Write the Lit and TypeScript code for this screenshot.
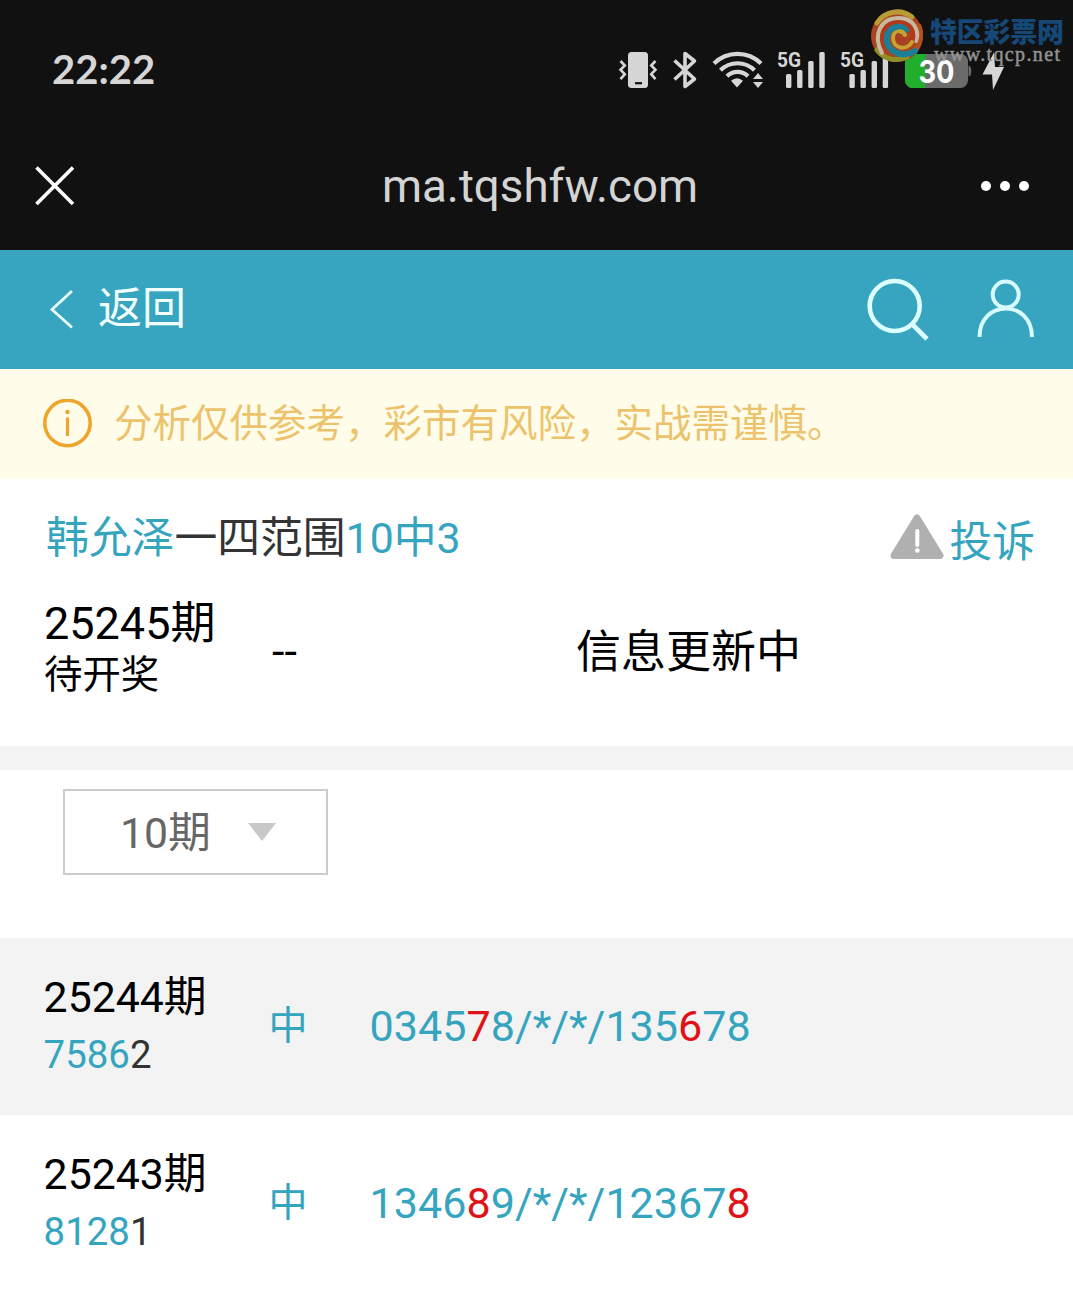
import { LitElement, html, svg, css } from "lit";
import { customElement } from "lit/decorators.js";

interface Run {
  text: string;
  tone: "hit" | "base" | "dark";
}

interface Draw {
  issue: string;
  result: Run[];
  mark: string;
  numbers: Run[];
}

const draws: Draw[] = [
  {
    issue: "25244期",
    result: [
      { text: "7586", tone: "base" },
      { text: "2", tone: "dark" },
    ],
    mark: "中",
    numbers: [
      { text: "0345", tone: "base" },
      { text: "7", tone: "hit" },
      { text: "8/*/*/135", tone: "base" },
      { text: "6", tone: "hit" },
      { text: "78", tone: "base" },
    ],
  },
  {
    issue: "25243期",
    result: [
      { text: "8128", tone: "base" },
      { text: "1", tone: "dark" },
    ],
    mark: "中",
    numbers: [
      { text: "1346", tone: "base" },
      { text: "8", tone: "hit" },
      { text: "9/*/*/12367", tone: "base" },
      { text: "8", tone: "hit" },
    ],
  },
];

@customElement("status-bar")
export class StatusBar extends LitElement {
  static styles = css`
    :host {
      display: flex;
      box-sizing: border-box;
      height: 125px;
      padding: 48px 60px 0 52px;
      justify-content: space-between;
      align-items: flex-start;
      position: relative;
      color: #d6d6d6;
    }
    .clock {
      font: 700 40px/42px Lato, "Open Sans", sans-serif;
    }
    .icons {
      display: flex;
    }
    .icons svg {
      display: block;
    }
    .small {
      font: 700 20px "Roboto", sans-serif;
    }
    .charge {
      font: 700 31px Inter, "Roboto", sans-serif;
    }
    .watermark {
      position: absolute;
      left: 865px;
      top: 5px;
    }
    .brand {
      font: 900 27px "Noto Sans CJK SC", sans-serif;
    }
    .site {
      font: 400 20px "Liberation Serif", serif;
    }
  `;

  private signal(left: number, width: number, text: number, bars: number) {
    const tops = [74, 70, 61, 52];
    return html`<svg width=${width} height="44" viewBox="${left} 48 ${width} 44">
      <text class="small" x=${text} y="67" fill="#d6d6d6" textLength="24" lengthAdjust="spacingAndGlyphs">5G</text>
      ${tops.map(
        (top, i) =>
          svg`<rect x=${bars + i * 11.1} y=${top} width="5.4" height=${88 - top} rx="1.5" fill="#d6d6d6"/>`
      )}
    </svg>`;
  }

  render() {
    return html`
      <div class="clock">22:22</div>
      <div class="icons">
        <svg width="46" height="44" viewBox="615 48 46 44" fill="none" stroke="#d6d6d6" stroke-width="2.6">
          <rect x="628" y="52" width="20" height="36" rx="3.5" fill="#d6d6d6" stroke="none" />
          <path d="M635 83.2h7" stroke="#111" stroke-width="2.2" />
          <path d="M620.5 61l4.3 4.5-4.3 4.2 4.3 4.5-4.3 5M655.5 61l-4.3 4.5 4.3 4.2-4.3 4.5 4.3 5" />
        </svg>
        <svg width="48" height="44" viewBox="661 48 48 44" fill="none" stroke="#d6d6d6" stroke-width="3.6" stroke-linejoin="round">
          <path d="M674.5 60.5l20 18.5-9.5 7.5v-33l9.5 7.5-20 18.5" />
        </svg>
        <svg width="60" height="44" viewBox="709 48 60 44" fill="none" stroke="#d6d6d6" stroke-width="4.2">
          <path d="M714 63.5a33.5 33.5 0 0 1 47 0" />
          <path d="M720.5 70.3a24 24 0 0 1 34 0" />
          <path d="M727 76.2a15 15 0 0 1 21 0" />
          <path d="M731 80.8q6-5 12 0l-6 6.8z" fill="#d6d6d6" stroke="none" />
          <path d="M753 79l5-6 5 6zM753 82h10l-5 6z" fill="#d6d6d6" stroke="none" />
        </svg>
        ${this.signal(769, 64, 777, 786)} ${this.signal(833, 62, 840, 849.4)}
        <svg width="80" height="44" viewBox="895 48 80 44">
          <defs>
            <clipPath id="cell"><rect x="905" y="54" width="63" height="34" rx="7.5" /></clipPath>
          </defs>
          <g clip-path="url(#cell)">
            <rect x="905" y="54" width="63" height="34" fill="#6b6b6b" />
            <rect x="905" y="54" width="20.5" height="34" fill="#20ae2c" />
          </g>
          <path d="M968.5 65.5q2.8.5 2.8 5.500t-2.8 5.5z" fill="#6b6b6b" />
          <text class="charge" x="918.5" y="83" fill="#fff" textLength="36" lengthAdjust="spacingAndGlyphs">30</text>
        </svg>
        <svg width="38" height="44" viewBox="975 48 38 44">
          <path d="M994 52.500L982.500 74.500h9.500L993 90l11-23h-9z" fill="#d6d6d6" />
        </svg>
      </div>
      <svg class="watermark" width="205" height="62" viewBox="865 5 205 62">
        <g fill="none" stroke-linecap="round">
          <circle cx="897" cy="36" r="26" fill="#a8441f" />
          <path d="M877 23A24 24 0 0 1 912 17" stroke="#b99b34" stroke-width="5" />
          <path d="M919 26A24 24 0 0 1 914 51" stroke="#b3501d" stroke-width="5" />
          <path d="M877 50A24 24 0 0 0 907 57" stroke="#8f9128" stroke-width="5" />
          <path d="M882 53C872 34 881 18 899 18c14 0 21 12 17 23" stroke="#c9b8a0" stroke-width="4" />
          <path d="M888 48C878 36 886 23 898 23c12 0 18 11 13 20" stroke="#b5371c" stroke-width="5" />
          <path d="M915 51C899 60 884 48 887 36c2-9 13-12 19-6" stroke="#1b7f97" stroke-width="6" />
          <path d="M912 42c-5 9-19 7-19-4 0-7 9-9 12-3" stroke="#c7a233" stroke-width="4" />
          <path d="M904 39c-3 5-9 1-6-4" stroke="#a63f22" stroke-width="4" />
        </g>
        <text class="brand" x="930" y="42" fill="#154777" textLength="134">特区彩票网</text>
        <text class="site" x="934" y="60.5" fill="#929292" stroke="#929292" stroke-width=".5" textLength="126">www.tqcp.net</text>
      </svg>
    `;
  }
}

@customElement("draw-row")
export class DrawRow extends LitElement {
  static properties = { draw: { attribute: false } };
  declare draw: Draw;

  static styles = css`
    :host {
      display: grid;
      grid-template-columns: 225px 101px 1fr;
      box-sizing: border-box;
      height: 177px;
      padding-left: 43.6px;
      align-items: center;
      font-size: 43.1px;
      line-height: 57px;
    }
    .period {
      padding-bottom: 2px;
    }
    .issue {
      color: #000;
      font-size: 42.8px;
    }
    .result {
      font-size: 38.4px;
    }
    .mark {
      font-size: 39px;
    }
    .base {
      color: #35a5bf;
    }
    .hit {
      color: #e01218;
    }
    .dark {
      color: #333;
    }
  `;

  private runs(list: Run[]) {
    return list.map((r) => html`<span class=${r.tone}>${r.text}</span>`);
  }

  render() {
    return html`
      <div class="period">
        <div class="issue">${this.draw.issue}</div>
        <div class="result">${this.runs(this.draw.result)}</div>
      </div>
      <div class="mark base">${this.draw.mark}</div>
      <div>${this.runs(this.draw.numbers)}</div>
    `;
  }
}

@customElement("app-root")
export class AppRoot extends LitElement {
  static styles = css`
    :host {
      display: block;
      height: 1290px;
      overflow: hidden;
      background: #fff;
      color: #000;
      font-family: Roboto, "Noto Sans CJK SC", sans-serif;
      white-space: nowrap;
    }
    svg {
      display: block;
    }
    .shell {
      background: #111;
      height: 250px;
    }
    .browser {
      display: flex;
      justify-content: space-between;
      align-items: center;
      height: 121px;
      padding: 0 43px 0 35px;
    }
    .host {
      font-size: 45.7px;
      line-height: 60px;
      color: #d4d4d4;
      padding: 3px 0 0 25px;
    }
    .nav {
      display: flex;
      align-items: center;
      box-sizing: border-box;
      height: 119px;
      padding: 0 38px 2px 49px;
      background: #37a5c0;
      color: #f2ffff;
    }
    .back {
      flex: 1;
      padding-left: 23px;
      font-size: 44px;
      line-height: 60px;
    }
    .person {
      margin-left: 47px;
    }
    .notice {
      display: flex;
      align-items: center;
      height: 110px;
      padding-left: 42px;
      gap: 22px;
      background: #fffdea;
      color: #ecc36c;
      font-size: 38.5px;
    }
    .warning {
      padding-bottom: 8px;
    }
    .title {
      display: flex;
      align-items: center;
      height: 60px;
      padding: 28px 38px 0 46px;
      font-size: 42.8px;
      color: #35a5bf;
    }
    .plan {
      flex: 1;
      padding-bottom: 7px;
    }
    .topic {
      color: #333;
    }
    .report {
      padding: 2px 0 0 5px;
    }
    .current {
      display: grid;
      grid-template-columns: 227px 305px 1fr;
      align-items: center;
      height: 168px;
      padding-left: 44px;
      font-size: 45px;
      line-height: 60px;
    }
    .pending {
      font-size: 38.4px;
      line-height: 41px;
    }
    .latest {
      padding-bottom: 13px;
    }
    .dash {
      padding: 1px 0 0 1px;
    }
    .state {
      padding-top: 4px;
    }
    .gap {
      height: 24px;
      margin-top: 11px;
      background: #f3f3f3;
    }
    .filter {
      height: 168px;
      box-sizing: border-box;
      padding: 19px 63px;
    }
    .select {
      display: flex;
      align-items: center;
      box-sizing: border-box;
      width: 265px;
      height: 86px;
      border: 2px solid #ccc;
      padding-left: 55px;
      gap: 37px;
      color: #666;
      font-size: 42.8px;
    }
    .choice {
      padding-bottom: 7px;
    }
    .striped {
      background: #f3f3f3;
    }
  `;

  render() {
    return html`
      <div class="shell">
        <status-bar></status-bar>
        <div class="browser">
          <svg width="40" height="40" viewBox="0 0 40 40" stroke="#fff" stroke-width="3.6">
            <path d="M1.5 1.5L38 38M38 1.5L1.5 38" />
          </svg>
          <div class="host">ma.tqshfw.com</div>
          <svg width="50" height="12" viewBox="0 0 50 12" fill="#fff">
            <circle cx="6" cy="6" r="5" />
            <circle cx="25" cy="6" r="5" />
            <circle cx="44" cy="6" r="5" />
          </svg>
        </div>
      </div>
      <div class="nav">
        <svg width="26" height="40" viewBox="0 0 26 40" fill="none" stroke="#e8ffff" stroke-width="2.8">
          <path d="M23 2L3 20.5 23 38.5" />
        </svg>
        <div class="back">返回</div>
        <svg width="64" height="64" viewBox="866 277 64 64" fill="none" stroke="#dcffff" stroke-width="4.6">
          <circle cx="894.7" cy="306" r="25" />
          <path d="M912 324l15 15" />
        </svg>
        <svg class="person" width="58" height="64" viewBox="977 277 58 64" fill="none" stroke="#d8fbff" stroke-width="4">
          <circle cx="1005.7" cy="294.5" r="13" />
          <path d="M979.5 337c0-38 52.5-38 52.5 0" />
        </svg>
      </div>
      <div class="notice">
        <svg width="50" height="50" viewBox="0 0 50 50" fill="none" stroke="#eda62b" stroke-width="3.6">
          <circle cx="25.5" cy="24" r="22.7" />
          <path d="M25.5 18.5V37" stroke-width="3.2" />
          <circle cx="25.5" cy="13" r="2.2" fill="#eda62b" stroke="none" />
        </svg>
        <span class="warning">分析仅供参考，彩市有风险，实战需谨慎。</span>
      </div>
      <div class="title">
        <div class="plan">韩允泽<span class="topic">一四范围</span>10中3</div>
        <svg width="54" height="46" viewBox="0 0 54 46">
          <path d="M27 4L50 41.5H4z" fill="#b0b0b0" stroke="#b0b0b0" stroke-width="7" stroke-linejoin="round" />
          <path d="M27.3 17v14" stroke="#fff" stroke-width="4" stroke-linecap="round" />
          <circle cx="27.3" cy="36.5" r="2.3" fill="#fff" />
        </svg>
        <div class="report">投诉</div>
      </div>
      <div class="current">
        <div class="latest">
          <div>25245期</div>
          <div class="pending">待开奖</div>
        </div>
        <div class="dash">--</div>
        <div class="state">信息更新中</div>
      </div>
      <div class="gap"></div>
      <div class="filter">
        <div class="select">
          <span class="choice">10期</span>
          <svg width="28" height="18" viewBox="0 0 28 18"><path d="M0 0h28L14 18z" fill="#c8c8c8" /></svg>
        </div>
      </div>
      ${draws.map((d, i) => html`<draw-row class=${i % 2 ? "" : "striped"} .draw=${d}></draw-row>`)}
    `;
  }
}
